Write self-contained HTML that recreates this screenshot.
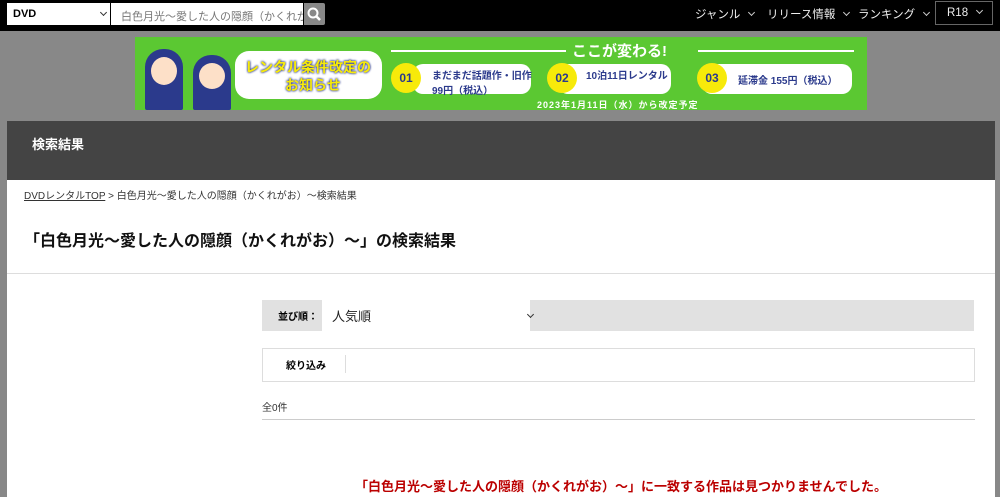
<!DOCTYPE html>
<html><head><meta charset="utf-8"><style>
*{margin:0;padding:0;box-sizing:border-box}
body{width:1000px;height:497px;overflow:hidden;background:#888;font-family:"Liberation Sans","Noto Sans CJK JP",sans-serif;position:relative}
.abs{position:absolute}
.top{left:0;top:0;width:1000px;height:31px;background:#000}
.nav{color:#eee;font-size:11.5px;top:6px}
.chev{display:inline-block;width:5px;height:5px;border-right:1.5px solid #ccc;border-bottom:1.5px solid #ccc;transform:rotate(45deg);margin-left:9px;position:relative;top:-3px}
.banner{left:135px;top:37px;width:732px;height:73px;background:#5bc832}
.pill{background:#fff;border-radius:10px;position:absolute}
.num{position:absolute;width:30px;height:30px;border-radius:50%;background:#f7ea0a;color:#2b3a8c;font-weight:bold;font-size:12px;text-align:center;line-height:30px}
.bt{position:absolute;color:#2b3a8c;font-weight:bold;font-size:10px}
</style></head><body>
<div class="abs top"></div>
<div class="abs" style="left:7px;top:3px;width:103px;height:22px;background:#fff;font-size:11px;font-weight:bold;padding:5px 6px">DVD<span class="chev" style="position:absolute;left:85px;top:7px;border-color:#333"></span></div>
<div class="abs" style="left:111px;top:3px;width:192px;height:22px;background:#fff;font-size:11px;color:#777;padding:5px 10px;white-space:nowrap;overflow:hidden">白色月光～愛した人の隠顔（かくれがお</div>
<div class="abs" style="left:304px;top:3px;width:21px;height:22px;background:#888;border-radius:0 2px 2px 0">
<svg width="21" height="22"><circle cx="9" cy="10" r="4.5" fill="none" stroke="#fff" stroke-width="2"/><line x1="12" y1="13" x2="16" y2="17" stroke="#fff" stroke-width="2.5"/></svg></div>
<div class="abs nav" style="left:695px">ジャンル<span class="chev"></span></div>
<div class="abs nav" style="left:767px">リリース情報<span class="chev"></span></div>
<div class="abs nav" style="left:858px">ランキング<span class="chev"></span></div>
<div class="abs nav" style="left:935px;top:1px;width:58px;height:24px;border:1px solid #666;padding:5px 0 0 11px">R18<span class="chev"></span></div>

<div class="abs banner">
<div style="position:absolute;left:10px;top:12px;width:38px;height:61px;background:#2b3a8c;border-radius:18px 18px 2px 2px"></div>
<div style="position:absolute;left:16px;top:20px;width:26px;height:28px;background:#fde0c8;border-radius:50%"></div>
<div style="position:absolute;left:58px;top:18px;width:38px;height:55px;background:#2b3a8c;border-radius:18px 18px 2px 2px"></div>
<div style="position:absolute;left:64px;top:26px;width:26px;height:26px;background:#fde0c8;border-radius:50%"></div>
<div class="pill" style="left:100px;top:14px;width:147px;height:48px;border-radius:14px"></div>
<div class="bt" style="left:110px;top:20px;font-size:14px;color:#f7ea0a;text-shadow:0 0 2px #2b3a8c,0 0 2px #2b3a8c">レンタル条件改定の</div>
<div class="bt" style="left:150px;top:38px;font-size:14px;color:#f7ea0a;text-shadow:0 0 2px #2b3a8c,0 0 2px #2b3a8c">お知らせ</div>
<div style="position:absolute;left:256px;top:13px;width:175px;height:2px;background:#fff"></div>
<div style="position:absolute;left:563px;top:13px;width:156px;height:2px;background:#fff"></div>
<div class="bt" style="left:437px;top:3px;color:#fff;font-size:15px">ここが変わる!</div>
<div class="pill" style="left:278px;top:27px;width:118px;height:30px"></div>
<div class="num" style="left:256px;top:26px">01</div>
<div class="bt" style="left:297px;top:30px">まだまだ話題作・旧作<br>99円（税込）</div>
<div class="pill" style="left:423px;top:27px;width:113px;height:30px"></div>
<div class="num" style="left:412px;top:26px">02</div>
<div class="bt" style="left:451px;top:30px">10泊11日レンタル</div>
<div class="pill" style="left:567px;top:27px;width:150px;height:30px"></div>
<div class="num" style="left:562px;top:26px">03</div>
<div class="bt" style="left:603px;top:35px">延滞金 155円（税込）</div>
<div class="bt" style="left:402px;top:61px;color:#fff;font-size:9px;letter-spacing:1px">2023年1月11日（水）から改定予定</div>
</div>

<div class="abs" style="left:7px;top:121px;width:988px;height:376px;background:#fff"></div>
<div class="abs" style="left:7px;top:121px;width:988px;height:59px;background:#444;color:#fff;font-size:13px;font-weight:bold;padding:13px 0 0 25px">検索結果</div>
<div class="abs" style="left:24px;top:187px;font-size:10px;color:#333"><span style="text-decoration:underline">DVDレンタルTOP</span> &gt; 白色月光～愛した人の隠顔（かくれがお）～検索結果</div>
<div class="abs" style="left:24px;top:227px;font-size:16px;font-weight:bold;color:#111">「白色月光～愛した人の隠顔（かくれがお）～」の検索結果</div>
<div class="abs" style="left:7px;top:273px;width:988px;height:1px;background:#ddd"></div>
<div class="abs" style="left:262px;top:300px;width:712px;height:31px;background:#e1e1e1"></div>
<div class="abs" style="left:278px;top:308px;font-size:10px;font-weight:bold">並び順：</div>
<div class="abs" style="left:322px;top:300px;width:208px;height:31px;background:#fff;font-size:13px;padding:6px 10px;color:#222">人気順<span class="chev" style="position:absolute;left:197px;top:12px;border-color:#333;width:5px;height:5px"></span></div>
<div class="abs" style="left:262px;top:348px;width:713px;height:34px;border:1px solid #ddd"></div>
<div class="abs" style="left:286px;top:357px;font-size:10px;font-weight:bold">絞り込み</div>
<div class="abs" style="left:345px;top:355px;width:1px;height:18px;background:#ddd"></div>
<div class="abs" style="left:262px;top:399px;font-size:10px;color:#333">全0件</div>
<div class="abs" style="left:262px;top:419px;width:713px;height:1px;background:#ccc"></div>
<div class="abs" style="left:355px;top:476px;font-size:13px;font-weight:bold;color:#b00">「白色月光～愛した人の隠顔（かくれがお）～」に一致する作品は見つかりませんでした。</div>
</body></html>
